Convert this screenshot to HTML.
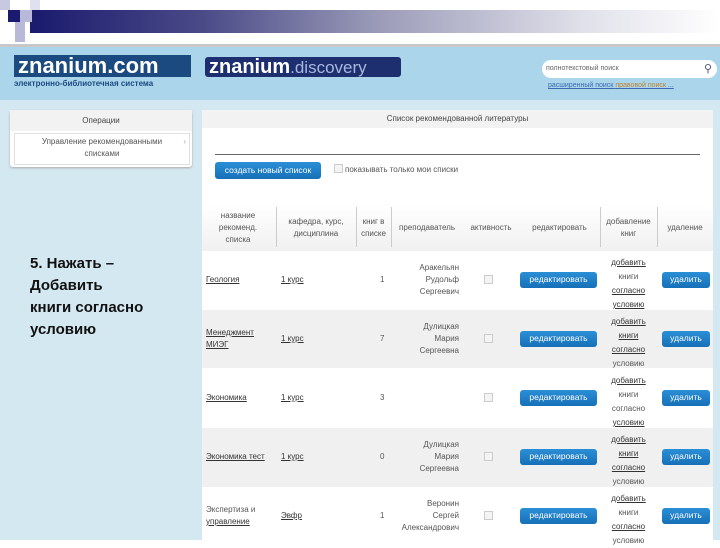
<!DOCTYPE html>
<html><head><meta charset="utf-8"><style>
*{margin:0;padding:0;box-sizing:border-box}
body{width:720px;height:540px;overflow:hidden;background:#fff;font-family:"Liberation Sans",sans-serif;position:relative}
.a{position:absolute}
.t{font-size:8px;color:#555;text-align:center;line-height:12px}
.u{text-decoration:underline;color:#333}
.btn{position:absolute;background:linear-gradient(#2b8fd6,#1670b8);color:#fff;font-size:8.5px;text-align:center;border-radius:3px;line-height:15px}
.cb{position:absolute;width:9px;height:9px;border:1px solid #ccc;background:#f4f4f4}
</style></head><body>
<div class="a" style="left:30px;top:10px;width:690px;height:23px;background:linear-gradient(90deg,#1a1a6e,#4a4a88 25%,#9a9ab8 50%,#e0e0ea 80%,#fff)"></div>
<div class="a" style="left:0;top:0;width:10px;height:10px;background:#c8c8e0"></div>
<div class="a" style="left:8px;top:10px;width:12px;height:12px;background:#1a1a6e"></div>
<div class="a" style="left:20px;top:10px;width:12px;height:12px;background:#b8b8d8"></div>
<div class="a" style="left:30px;top:0;width:10px;height:10px;background:#e0e0ee"></div>
<div class="a" style="left:15px;top:22px;width:10px;height:20px;background:#b8b8d8"></div>
<div class="a" style="left:0;top:44px;width:720px;height:3px;background:#c8c8c8"></div>
<div class="a" style="left:0;top:47px;width:720px;height:53px;background:#aad5ea"></div>
<div class="a" style="left:0;top:100px;width:720px;height:440px;background:#d4e8f2"></div>
<div class="a" style="left:14px;top:55px;width:177px;height:22px;background:#1b4a80;color:#fff;font-size:22px;font-weight:bold;line-height:22px;padding-left:4px">znanium.com</div>
<div class="a" style="left:14px;top:79px;font-size:8px;color:#1b4a80;font-weight:bold">электронно-библиотечная система</div>
<div class="a" style="left:205px;top:57px;width:196px;height:20px;background:#1d2f6e;color:#fff;font-size:20px;font-weight:bold;line-height:20px;padding-left:4px;border-radius:3px">znanium<span style="font-weight:normal;color:#a8b8e0;font-size:17px">.discovery</span></div>
<div class="a" style="left:542px;top:60px;width:175px;height:18px;background:#fff;border-radius:9px;font-size:7px;color:#666;line-height:18px;padding-left:4px">полнотекстовый поиск<span style="position:absolute;right:5px;color:#557;font-size:11px">&#9906;</span></div>
<div class="a" style="left:548px;top:82px;font-size:7px;color:#3a6ab0;text-decoration:underline">расширенный поиск <span style="color:#c08030">правовой поиск</span> ...</div>
<div class="a" style="left:10px;top:110px;width:182px;height:57px;background:#fff;border-radius:3px;box-shadow:0 1px 2px #aaa"></div>
<div class="a" style="left:10px;top:110px;width:182px;height:21px;background:#f2f2f2;font-size:8px;color:#444;text-align:center;line-height:21px">Операции</div>
<div class="a" style="left:14px;top:133px;width:176px;height:32px;border:1px solid #e0e0e0;font-size:8px;color:#555;text-align:center;line-height:12px;padding-top:2px">Управление рекомендованными<br>списками<span style="position:absolute;right:3px;top:2px;color:#aaa">›</span></div>
<div class="a" style="left:30px;top:253px;font-size:15px;font-weight:bold;color:#111;line-height:22px">5. Нажать –<br>Добавить<br>книги согласно<br>условию</div>
<div class="a" style="left:202px;top:110px;width:511px;height:430px;background:#fff"></div>
<div class="a" style="left:202px;top:110px;width:511px;height:18px;background:#f2f2f2;font-size:8px;color:#444;text-align:center;line-height:18px">Список рекомендованной литературы</div>
<div class="a" style="left:215px;top:154px;width:485px;height:1px;background:#666"></div>
<div class="btn" style="left:215px;top:162px;width:106px;height:17px;line-height:17px">создать новый список</div>
<div class="cb" style="left:334px;top:164px"></div>
<div class="a" style="left:345px;top:165px;font-size:8px;color:#555">показывать только мои списки</div>
<div class="a" style="left:202px;top:205px;width:511px;height:46px;background:linear-gradient(#fff,#f0f0f0)"></div>
<div class="a t" style="left:200px;top:210px;width:76px">название<br>рекоменд.<br>списка</div>
<div class="a t" style="left:276px;top:216px;width:80px">кафедра, курс,<br>дисциплина</div>
<div class="a t" style="left:356px;top:216px;width:35px">книг в<br>списке</div>
<div class="a t" style="left:391px;top:222px;width:72px">преподаватель</div>
<div class="a t" style="left:463px;top:222px;width:56px">активность</div>
<div class="a t" style="left:519px;top:222px;width:81px">редактировать</div>
<div class="a t" style="left:600px;top:216px;width:57px">добавление<br>книг</div>
<div class="a t" style="left:657px;top:222px;width:56px">удаление</div>
<div class="a" style="left:276px;top:207px;width:1px;height:40px;background:#ccc"></div>
<div class="a" style="left:356px;top:207px;width:1px;height:40px;background:#ccc"></div>
<div class="a" style="left:391px;top:207px;width:1px;height:40px;background:#ccc"></div>
<div class="a" style="left:600px;top:207px;width:1px;height:40px;background:#ccc"></div>
<div class="a" style="left:657px;top:207px;width:1px;height:40px;background:#ccc"></div>
<!-- rows -->
<div class="a" style="left:202px;top:310px;width:511px;height:58px;background:#f0f0f0"></div>
<div class="a" style="left:202px;top:428px;width:511px;height:59px;background:#f0f0f0"></div>
<!-- row contents: centers 280,339,398,457,516 -->
<div class="a t u" style="left:206px;top:274px;text-align:left">Геология</div>
<div class="a t u" style="left:281px;top:274px;text-align:left">1 курс</div>
<div class="a t" style="left:380px;top:274px">1</div>
<div class="a t" style="left:391px;top:262px;width:68px;text-align:right">Аракельян<br>Рудольф<br>Сергеевич</div>
<div class="a t u" style="left:206px;top:327px;text-align:left">Менеджмент<br>МИЭГ</div>
<div class="a t u" style="left:281px;top:333px;text-align:left">1 курс</div>
<div class="a t" style="left:380px;top:333px">7</div>
<div class="a t" style="left:391px;top:321px;width:68px;text-align:right">Дулицкая<br>Мария<br>Сергеевна</div>
<div class="a t u" style="left:206px;top:392px;text-align:left">Экономика</div>
<div class="a t u" style="left:281px;top:392px;text-align:left">1 курс</div>
<div class="a t" style="left:380px;top:392px">3</div>
<div class="a t u" style="left:206px;top:451px;text-align:left">Экономика тест</div>
<div class="a t u" style="left:281px;top:451px;text-align:left">1 курс</div>
<div class="a t" style="left:380px;top:451px">0</div>
<div class="a t" style="left:391px;top:439px;width:68px;text-align:right">Дулицкая<br>Мария<br>Сергеевна</div>
<div class="a t" style="left:206px;top:504px;text-align:left">Экспертиза и<br><span class="u">управление</span></div>
<div class="a t u" style="left:281px;top:510px;text-align:left">Эвфр</div>
<div class="a t" style="left:380px;top:510px">1</div>
<div class="a t" style="left:391px;top:498px;width:68px;text-align:right">Веронин<br>Сергей<br>Александрович</div>
<div class="cb" style="left:484px;top:275px"></div>
<div class="cb" style="left:484px;top:334px"></div>
<div class="cb" style="left:484px;top:393px"></div>
<div class="cb" style="left:484px;top:452px"></div>
<div class="cb" style="left:484px;top:511px"></div>
<div class="btn" style="left:520px;top:272px;width:77px;height:16px">редактировать</div>
<div class="btn" style="left:520px;top:331px;width:77px;height:16px">редактировать</div>
<div class="btn" style="left:520px;top:390px;width:77px;height:16px">редактировать</div>
<div class="btn" style="left:520px;top:449px;width:77px;height:16px">редактировать</div>
<div class="btn" style="left:520px;top:508px;width:77px;height:16px">редактировать</div>
<div class="btn" style="left:662px;top:272px;width:48px;height:16px">удалить</div>
<div class="btn" style="left:662px;top:331px;width:48px;height:16px">удалить</div>
<div class="btn" style="left:662px;top:390px;width:48px;height:16px">удалить</div>
<div class="btn" style="left:662px;top:449px;width:48px;height:16px">удалить</div>
<div class="btn" style="left:662px;top:508px;width:48px;height:16px">удалить</div>
<div class="a t" style="left:600px;top:256px;width:57px;line-height:14px"><span class="u">добавить</span><br>книги<br><span class="u">согласно</span><br><span class="u">условию</span></div>
<div class="a t" style="left:600px;top:315px;width:57px;line-height:14px"><span class="u">добавить</span><br><span class="u">книги</span><br><span class="u">согласно</span><br>условию</div>
<div class="a t" style="left:600px;top:374px;width:57px;line-height:14px"><span class="u">добавить</span><br>книги<br>согласно<br><span class="u">условию</span></div>
<div class="a t" style="left:600px;top:433px;width:57px;line-height:14px"><span class="u">добавить</span><br><span class="u">книги</span><br><span class="u">согласно</span><br>условию</div>
<div class="a t" style="left:600px;top:492px;width:57px;line-height:14px"><span class="u">добавить</span><br>книги<br><span class="u">согласно</span><br>условию</div>
</body></html>
